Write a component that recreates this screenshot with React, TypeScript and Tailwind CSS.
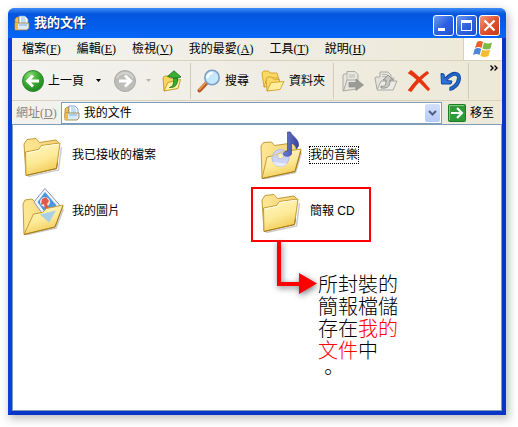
import type { ReactNode } from "react";

const DocIcon = ({ className }: { className?: string }) => (
  <svg viewBox="0 0 16 16" className={className} aria-hidden="true">
    <path d="M1 4l2-2h2v11H1z" fill="#f3c04b" stroke="#b07a10" strokeWidth=".7" />
    <path d="M5 1h6l3 3v7H5z" fill="#fff" stroke="#5b8fd6" strokeWidth=".8" />
    <path d="M7 3h4M7 5h5M7 7h5" stroke="#6aa4ea" strokeWidth=".8" />
    <path d="M3 8h12v5l-2 2H1V8z" fill="#d9e8fa" stroke="#9a7a2c" strokeWidth=".8" />
    <path d="M1 8h3v7H1z" fill="#f0b93a" />
    <path d="M5 10h8" stroke="#7fb0ea" />
  </svg>
);

const WindowsFlag = () => (
  <svg width="22" height="20" viewBox="0 0 22 20" aria-hidden="true">
    <path d="M5 3c2-1.500 4-1.500 6 0L9.500 9c-2-1.500-4-1.500-6.500 0z" fill="#e8612c" />
    <path d="M12 3.500c3 1.300 5 1.300 8 0L18.500 9.500c-3 1.300-5 1.300-8 0z" fill="#7fb943" />
    <path d="M2.700 10c2.300-1.500 4.500-1.500 6.500 0L7.500 16c-2-1.500-4-1.500-6.500 0z" fill="#4a86dc" />
    <path d="M10.200 10.500c2.800 1.300 5 1.300 8 0L16.500 17c-3 1.300-5 1.300-8 0z" fill="#f3bd32" />
  </svg>
);

const BackIcon = () => (
  <svg width="22" height="22" viewBox="0 0 22 22" aria-hidden="true">
    <defs>
      <radialGradient id="green" cx=".35" cy=".25" r=".8">
        <stop offset="0" stopColor="#8ddb78" />
        <stop offset=".5" stopColor="#3cab32" />
        <stop offset="1" stopColor="#1f8420" />
      </radialGradient>
    </defs>
    <circle cx="11" cy="11" r="10.500" fill="url(#green)" stroke="#2c8a2a" />
    <path d="M11 5.500L5.500 11l5.500 5.500M6 11h11" fill="none" stroke="#fff" strokeWidth="3" />
  </svg>
);

const ForwardIcon = () => (
  <svg width="22" height="22" viewBox="0 0 22 22" aria-hidden="true">
    <circle cx="11" cy="11" r="10.500" fill="#bdbdb9" stroke="#a9a9a5" />
    <path d="M3 8a9 9 0 0 1 16 0" fill="none" stroke="#d2d2ce" strokeWidth="2" />
    <path d="M11 5.500l5.500 5.500-5.500 5.500M16 11H5" fill="none" stroke="#fff" strokeWidth="3" />
  </svg>
);

const UpFolderIcon = () => (
  <svg width="20" height="22" viewBox="0 0 20 22" aria-hidden="true">
    <path d="M1 8l1.500-2h4l1.500 2 8 1v7L2 21z" fill="#f7d45e" stroke="#c9a02c" />
    <path d="M2 21l4-8.500 12.500-3L16 18.500z" fill="#fff1a6" stroke="#c9a02c" />
    <path d="M7.500 17.500c4-1 4.500-4.500 4-9.500H15.500c.5 6-2 10-8 9.500z" fill="#3aae31" stroke="#16701a" strokeWidth=".8" />
    <path d="M5.500 6.500L12 .8l7 6.200-3.500 1-4-.2z" fill="#3aae31" stroke="#16701a" strokeWidth=".8" />
  </svg>
);

const SearchIcon = () => (
  <svg width="24" height="24" viewBox="0 0 24 24" aria-hidden="true">
    <path d="M2.500 21.500l7-7.500" stroke="#b5561c" strokeWidth="4" strokeLinecap="round" />
    <path d="M2.500 20.500l6.500-7" stroke="#ef9a55" strokeWidth="1.500" strokeLinecap="round" />
    <circle cx="15" cy="8.500" r="7.200" fill="#c4e8fd" stroke="#7f9fc8" strokeWidth="1.600" />
    <path d="M10.500 9a5 5 0 0 1 5-5" fill="none" stroke="#fff" strokeWidth="2.400" />
  </svg>
);

const FoldersIcon = () => (
  <svg width="24" height="22" viewBox="0 0 24 22" aria-hidden="true">
    <g stroke="#cfa02a" strokeWidth=".9">
      <path d="M1 3l1.500-2h5L9 3h7l1 3v7L3 17z" fill="#fbd864" />
      <path d="M3 17L6 8h12l-3 6z" fill="#fff0a0" />
      <path d="M5 9l1.500-2h4.500l1.500 2 6 .5v7L6 21z" fill="#fbd864" />
      <path d="M6 21l4-8.500 13-1-4 8z" fill="#ffee9c" />
    </g>
  </svg>
);

const MoveToIcon = () => (
  <svg width="22" height="22" viewBox="0 0 22 22" aria-hidden="true">
    <path d="M1 5l1-1h3V1.500h8l3 3V12l-2 7-13 2z" fill="#e6e5de" stroke="#aaa9a2" />
    <path d="M5 4v6M7 5h6M7 7h6" fill="none" stroke="#bcbbb4" />
    <path d="M1.500 21L5 10h10" fill="none" stroke="#aaa9a2" />
    <path d="M7 12.500h7V9l7.500 6-7.500 5.500V17H7z" fill="#9c9c97" stroke="#85857f" strokeWidth=".6" />
  </svg>
);

const CopyToIcon = () => (
  <svg width="24" height="22" viewBox="0 0 24 22" aria-hidden="true">
    <path d="M1 8l1-1h4V2h8l3 3v3h3l-2 11H3z" fill="#e4e3dc" stroke="#aaa9a2" />
    <path d="M8 4.500h5M8 6.500h7" stroke="#bcbbb4" />
    <path d="M3 20l4-9h16l-4 9z" fill="#ecebe5" stroke="#aaa9a2" />
    <path d="M7 16c5 1 5-2 5-6H9l5-5 5 5h-3c0 5-1 9-9 8z" fill="#c9c8c2" stroke="#85857f" strokeWidth=".8" />
  </svg>
);

const DeleteIcon = () => (
  <svg width="22" height="22" viewBox="0 0 22 22" aria-hidden="true">
    <path d="M1 3l2-2c7 5 12 11 18 18l-1 1C14 14 8 7 1 3z" fill="#e8350f" stroke="#e8350f" strokeWidth="1.600" />
    <path d="M20 3l-1-1C12 7 6 13 1 20l2 1C8 14 13 8 20 3z" fill="#e8350f" stroke="#e8350f" strokeWidth="1.600" />
  </svg>
);

const UndoIcon = () => (
  <svg width="22" height="22" viewBox="0 0 22 22" aria-hidden="true">
    <path d="M9.500 19c3 0 9-4.500 9.500-10.500C19.300 3 13.500 1.500 6 9" fill="none" stroke="#11489f" strokeWidth="4" />
    <path d="M1 3.500l3 .5.500 4 2 2.500 5.500.5-1 3H1.500z" fill="#2b74d6" stroke="#11489f" />
    <path d="M9.500 19c3 0 9-4.500 9.500-10.500C19.300 3 13.500 1.500 5.500 10" fill="none" stroke="#2468c8" strokeWidth="2.200" />
  </svg>
);

const GoIcon = () => (
  <svg width="18" height="18" viewBox="0 0 18 18" aria-hidden="true">
    <rect x=".5" y=".5" width="17" height="17" rx="1" fill="#2f9b38" stroke="#1c7a28" />
    <path d="M1.500 16V1.500H16" fill="none" stroke="#7ccc78" />
    <path d="M9 4l5 5-5 5M13.500 9H3" fill="none" stroke="#fff" strokeWidth="2" />
  </svg>
);

const FolderGradients = () => (
  <svg width="0" height="0" className="absolute" aria-hidden="true">
    <defs>
      <linearGradient id="front" x1="0" y1="0" x2=".4" y2="1">
        <stop offset="0" stopColor="#fff8cc" />
        <stop offset=".6" stopColor="#fdea98" />
        <stop offset="1" stopColor="#f3cc58" />
      </linearGradient>
      <linearGradient id="back" x1="0" y1="0" x2="1" y2="0">
        <stop offset="0" stopColor="#fde795" />
        <stop offset="1" stopColor="#f3d276" />
      </linearGradient>
      <linearGradient id="note" x1="0" y1="0" x2="1" y2="0">
        <stop offset="0" stopColor="#6f7cd0" />
        <stop offset="1" stopColor="#35429c" />
      </linearGradient>
    </defs>
  </svg>
);

const ClosedFolder = () => (
  <svg width="42" height="48" viewBox="0 0 42 48" aria-hidden="true">
    <path d="M6 45.500L36.500 39 39.500 16" fill="none" stroke="#a8a8a8" strokeWidth="1.500" opacity=".6" />
    <path d="M2 13l3-4.500 9-1 3.500 4L34 9l2.500 2.500-2 26L4 44z" fill="url(#back)" stroke="#c39b35" />
    <path d="M3.500 21l13-2.500 3-4 18.500-2.500-3.500 25.500L4 44.500z" fill="url(#front)" stroke="#c69c32" />
    <path d="M4.500 22l12.500-2.500 3-4 16.500-2.300" fill="none" stroke="#fffbe2" />
    <path d="M4 44.500l30.500-7 1-6" fill="none" stroke="#a87d1c" />
  </svg>
);

const PicturesFolder = () => (
  <svg width="42" height="48" viewBox="0 0 42 48" aria-hidden="true">
    <path d="M3 48l31-7 7.500-19" fill="none" stroke="#a8a8a8" strokeWidth="1.500" opacity=".6" />
    <path d="M1 17l2-4 7-1 3 3 20-2 3 3-3 22L2 47z" fill="url(#back)" stroke="#c39b35" />
    <path d="M23 1.500L38.500 19 25 33 12 15z" fill="#f2f6fb" stroke="#8b99ab" />
    <path d="M23 5l11.500 13.500L25 28.500 15.500 15z" fill="#4797e5" />
    <circle cx="23" cy="15" r="5" fill="#f4e6e2" />
    <path d="M20 12l4-2 3 4-2 3 2 4-4 1-1-5-3 1z" fill="#e2574b" />
    <path d="M11.500 27l9-1.500 4-4 16.500-3.500-8 22L2 47.500z" fill="url(#front)" stroke="#c69c32" />
    <path d="M18 27.500l16-4-7 12z" fill="#9fccee" opacity=".9" />
    <path d="M2 47.500l31-7.500 8-21" fill="none" stroke="#a87d1c" />
  </svg>
);

const MusicFolder = () => (
  <svg width="42" height="48" viewBox="0 0 42 48" aria-hidden="true">
    <path d="M3 48l32.500-6.500 6-20" fill="none" stroke="#a8a8a8" strokeWidth="1.500" opacity=".6" />
    <path d="M1 15l2.500-3.500 8-.5 3 3.500 18-2.500 4 4-3 21L2 47z" fill="url(#back)" stroke="#c39b35" />
    <path d="M7 26l10-2 4-3 20-3L35 40.500 2 47.500z" fill="url(#front)" stroke="#c69c32" />
    <circle cx="20.500" cy="27" r="8.500" fill="#ccd3f6" stroke="#b4bce6" />
    <path d="M13 31a8.500 8.500 0 0 0 14 1.500z" fill="#e8ebfc" />
    <circle cx="20.500" cy="25" r="3" fill="#fff3b0" stroke="#b4bce6" />
    <path d="M12 24.500l5-1 4-2.500 9-1.400" fill="none" stroke="#e4c462" />
    <path d="M27.500 1h3c1 4 9 7 8 14l-2 3c-1-4-3-5-5-6v11c-1 3-8 3-8 0 0-2 2-3 4-3z" fill="url(#note)" stroke="#36439b" strokeWidth=".7" />
    <path d="M2 47.500l33-7 6-21" fill="none" stroke="#a87d1c" />
  </svg>
);

const Separator = () => <span className="h-9 w-px shrink-0 bg-[#d0cbb6]" />;

const Caret = ({ className }: { className: string }) => (
  <svg width="6" height="4" viewBox="0 0 6 4" className={className} aria-hidden="true">
    <path d="M0 0h5L2.500 3z" fill="currentColor" />
  </svg>
);

type MenuEntry = { label: string; accessKey: string };

const menus: MenuEntry[] = [
  { label: "檔案", accessKey: "F" },
  { label: "編輯", accessKey: "E" },
  { label: "檢視", accessKey: "V" },
  { label: "我的最愛", accessKey: "A" },
  { label: "工具", accessKey: "T" },
  { label: "說明", accessKey: "H" },
];

const AccessLabel = ({ label, accessKey }: MenuEntry) => (
  <>
    {label}
    <span className="font-['Liberation_Serif',serif]">
      (<span className="underline underline-offset-1">{accessKey}</span>)
    </span>
  </>
);

const TitleBar = () => (
  <header className="flex h-[30px] items-center gap-1 rounded-t-md bg-linear-to-b from-[#3c8cf8] via-[#0355dd] via-20% to-[#0566f8] px-1.5">
    <DocIcon className="size-4" />
    <h1 className="flex-1 text-[13px] font-bold text-white text-shadow-[1px_1px_1px_#0a2a80]">我的文件</h1>
    <div className="flex gap-0.5 pt-1">
      <button aria-label="最小化" className="size-[21px] rounded-[3px] border border-white bg-linear-to-br from-[#6f9bf2] via-[#2f62e0] to-[#1f50d0]">
        <svg viewBox="0 0 19 19" aria-hidden="true"><path d="M4 12h7v3H4z" fill="#fff" /></svg>
      </button>
      <button aria-label="最大化" className="size-[21px] rounded-[3px] border border-white bg-linear-to-br from-[#6f9bf2] via-[#2f62e0] to-[#1f50d0]">
        <svg viewBox="0 0 19 19" aria-hidden="true"><path d="M4 4h11v11H4zM5 7v7h9V7z" fill="#fff" fillRule="evenodd" /></svg>
      </button>
      <button aria-label="關閉" className="size-[21px] rounded-[3px] border border-white bg-linear-to-br from-[#f0997c] via-[#e0512f] to-[#c93a16]">
        <svg viewBox="0 0 19 19" aria-hidden="true"><path d="M4.500 4.500l10 10m0-10l-10 10" stroke="#fff" strokeWidth="2.200" /></svg>
      </button>
    </div>
  </header>
);

const MenuBar = () => (
  <div className="flex h-[23px] border-b border-[#d8d2bd]">
    <nav className="flex flex-1 items-center pl-0.5">
      {menus.map((menu) => (
        <button key={menu.accessKey} className="px-2 whitespace-nowrap">
          <AccessLabel {...menu} />
        </button>
      ))}
    </nav>
    <div className="flex w-[39px] items-center justify-center border-l border-[#d8d2bd] bg-white">
      <WindowsFlag />
    </div>
  </div>
);

const ToolBar = () => (
  <div className="flex h-10 items-center border-b border-[#d8d2bd] pl-2.5 whitespace-nowrap">
    <button className="flex items-center gap-1">
      <BackIcon />
      上一頁
      <Caret className="ml-2" />
    </button>
    <button aria-label="下一頁" className="ml-3 flex items-center gap-2.5" disabled>
      <ForwardIcon />
      <Caret className="text-[#b8b5a8]" />
    </button>
    <button aria-label="上移一層" className="mr-2 ml-2.5">
      <UpFolderIcon />
    </button>
    <Separator />
    <button className="ml-1.5 flex items-center gap-1">
      <SearchIcon />
      搜尋
    </button>
    <button className="mr-2 ml-3 flex items-center gap-1">
      <FoldersIcon />
      資料夾
    </button>
    <Separator />
    <div className="mr-1.5 ml-2 flex items-center gap-2.5">
      <button aria-label="移至資料夾"><MoveToIcon /></button>
      <button aria-label="複製到資料夾"><CopyToIcon /></button>
      <button aria-label="刪除"><DeleteIcon /></button>
      <button aria-label="復原"><UndoIcon /></button>
    </div>
    <Separator />
    <button aria-label="其他按鈕" className="mt-1 mr-1 ml-auto self-start">
      <svg width="8" height="6" viewBox="0 0 8 6" aria-hidden="true">
        <path d="M.5 .5L3 3 .5 5.500M4.500 .5L7 3 4.500 5.500" fill="none" stroke="#000" strokeWidth="1.400" />
      </svg>
    </button>
  </div>
);

const AddressBar = () => (
  <form className="flex h-[23px] items-center pl-1" onSubmit={(e) => e.preventDefault()}>
    <label htmlFor="address" className="pr-1 whitespace-nowrap text-[#8a877b]">
      <AccessLabel label="網址" accessKey="D" />
    </label>
    <div className="flex h-[22px] min-w-0 flex-1 items-center border border-[#7f9db9] bg-white pr-px pl-0.5">
      <DocIcon className="size-4 shrink-0" />
      <input id="address" defaultValue="我的文件" className="ml-1 min-w-0 flex-1 outline-none" />
      <button type="button" aria-label="展開網址清單" className="flex h-[18px] w-[15px] items-center justify-center rounded-xs bg-linear-to-b from-[#d3e0fd] to-[#b5c9f6]">
        <svg width="9" height="6" viewBox="0 0 9 6" aria-hidden="true">
          <path d="M1 1l3.500 3.500L8 1" fill="none" stroke="#4d6185" strokeWidth="2" />
        </svg>
      </button>
    </div>
    <button className="ml-1.5 flex items-center gap-1 pr-2 whitespace-nowrap">
      <GoIcon />
      移至
    </button>
  </form>
);

type FileItemProps = { name: string; icon: ReactNode; focused?: boolean; children?: ReactNode };

const FileItem = ({ name, icon, focused, children }: FileItemProps) => (
  <li className="relative flex h-14 items-center gap-2">
    {icon}
    <button className={focused ? "outline outline-dotted outline-black" : ""}>{name}</button>
    {children}
  </li>
);

// red frame, arrow and note laid over the packaged folder
const Callout = () => (
  <>
    <div className="pointer-events-none absolute top-1 -left-[9px] h-[55px] w-[120px] border-2 border-[#f00]" />
    <svg width="48" height="58" viewBox="0 0 48 58" className="absolute top-[58px] left-2.5 drop-shadow-[1px_2px_3px_#777]" aria-hidden="true">
      <path d="M7 0h4v41h18v-9l18 10.500L29 53v-8H7z" fill="#f00" />
    </svg>
    <p className="absolute top-[91px] left-[58px] text-[20px] leading-[22px] font-light whitespace-nowrap">
      所封裝的
      <br />
      簡報檔儲
      <br />
      存在<span className="text-[#f00]">我的</span>
      <br />
      <span className="text-[#f00]">文件</span>中
      <br />。
    </p>
  </>
);

const App = () => {
  return (
    <div className="flex min-h-screen bg-white pt-2 pr-3 pb-3 pl-2 font-['Liberation_Sans','Noto_Sans_CJK_TC',sans-serif] text-xs text-black">
      <FolderGradients />
      <section className="flex min-w-0 flex-1 flex-col rounded-t-lg bg-[#0a46e0] shadow-[2px_3px_8px_1px_#8888]">
        <TitleBar />
        <div className="flex flex-1 flex-col border-x-4 border-b-4 border-[#0a3fdc] border-r-[#0835c8] border-b-[#0835c8]">
          <div className="bg-linear-to-r from-[#f3f2ef] to-[#ece9d8]">
            <MenuBar />
            <ToolBar />
            <AddressBar />
          </div>
          <main className="flex-1 border border-[#7f9db9] bg-white">
            <ul className="grid grid-cols-[repeat(auto-fill,238px)] pt-0.5 pl-[9px]">
              <FileItem name="我已接收的檔案" icon={<ClosedFolder />} />
              <FileItem name="我的音樂" icon={<MusicFolder />} focused />
              <FileItem name="我的圖片" icon={<PicturesFolder />} />
              <FileItem name="簡報 CD" icon={<ClosedFolder />}>
                <Callout />
              </FileItem>
            </ul>
          </main>
        </div>
      </section>
    </div>
  );
};

export default App;
